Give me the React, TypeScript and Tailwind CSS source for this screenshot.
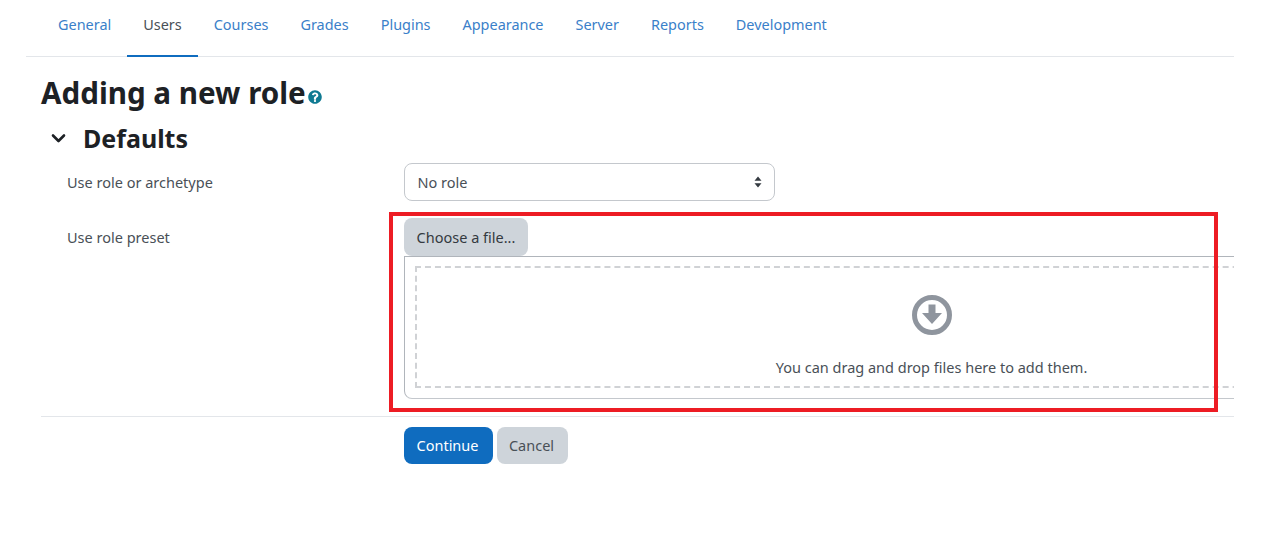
const tabs = ["General", "Users", "Courses", "Grades", "Plugins", "Appearance", "Server", "Reports", "Development"];

export default function App() {
  return (
    <div className="relative h-[537px] w-[1273px] overflow-hidden bg-white text-[14.5px] leading-[22px] text-[#495057]" style={{ fontFamily: '"Noto Sans", "Open Sans", sans-serif' }}>
      <div className="ml-[26px] w-[1208px] overflow-hidden">
        <nav className="flex h-[57px] items-stretch border-b border-[#e3e6ea] pl-[16px] text-[14.44px]">
          {tabs.map((t) => (
            <a key={t} className={t === "Users" ? "flex h-[57px] items-center border-b-2 border-[#0f6cbf] px-[16px] pb-[5px] text-[#495057]" : "flex h-[57px] items-center border-b-2 border-transparent px-[16px] pb-[5px] text-[#3a80c9]"}>{t}</a>
          ))}
        </nav>
        <div className="pl-[15px]">
          <h1 className="mt-[16px] flex items-end text-[29.600px] font-bold leading-[40px] text-[#1d2125]">
            Adding a new role
            <svg className="mb-[9px] ml-[2px] h-[14px] w-[14px]" viewBox="0 0 512 512"><path fill="#0f7a92" d="M504 256c0 137-111 248-248 248S8 393 8 256 119 8 256 8s248 111 248 248zM262.700 90c-54.500 0-89.300 23-116.500 63.800-3.500 5.300-2.400 12.400 2.700 16.300l34.700 26.300c5.200 3.900 12.600 3 16.700-2.100 17.900-22.700 30.100-35.800 57.300-35.800 20.400 0 45.700 13.100 45.700 33 0 15-12.400 22.700-32.600 34-23.600 13.200-54.800 29.700-54.800 70.900V340c0 6.600 5.400 12 12 12h56c6.600 0 12-5.400 12-12v-41.300c0-28.600 83.400-29.700 83.400-107C378 133.400 318 90 262.700 90zM256 368c-20 0-40 16-40 36s20 36 40 36 40-16 40-36-20-36-40-36z" /></svg>
          </h1>
          <div className="mt-[7px] flex items-center text-[25px] font-bold leading-[36px] text-[#1d2125]">
            <svg className="ml-[9px] mr-[16px] h-[16px] w-[17px]" viewBox="0 0 16 16" fill="none" stroke="#1d2125" strokeWidth="2.600" strokeLinecap="round" strokeLinejoin="round"><path d="M2.500 5.500 8 11l5.500-5.500" /></svg>
            Defaults
          </div>
          <div className="mt-[7px] flex">
            <div className="w-[363px] pl-[26px] pt-[8px]">Use role or archetype</div>
            <div className="-ml-[0.5px] flex h-[38px] w-[371px] items-center justify-between rounded-[8px] border border-[#c4c8cd] pl-[13px] pr-[12px]">
              <span>No role</span>
              <svg className="h-[12px] w-[8px]" viewBox="0 0 8 12" fill="#343a40"><path d="M4 0.500 7.500 4.800H0.500zM4 11.500 0.500 7.200h7z" /></svg>
            </div>
          </div>
          <div className="mt-[17px] flex">
            <div className="w-[363px] shrink-0 pl-[26px] pt-[8px]">Use role preset</div>
            <div className="w-[1056px] shrink-0">
              <button className="block h-[38px] w-[124px] rounded-[8px] bg-[#ced4da] text-center text-[#343a40]">Choose a file...</button>
              <div className="h-[143px] rounded-b-[8px] border border-[#b0b5bb] border-b-[#c4c8cd] p-[9px_11px_11px_10px]">
                <div className="flex h-[122px] flex-col items-center border-2 border-dashed border-[#d0d2d5] pt-[27px]">
                  <svg className="h-[40px] w-[40px]" viewBox="0 0 40 40"><circle cx="20" cy="20" r="17.500" fill="none" stroke="#8f959e" strokeWidth="5" /><path fill="#8f959e" d="M16.500 9.500h7V18H30L20 29 10 18h6.500z" /></svg>
                  <div className="mt-[21px] text-[#495057]">You can drag and drop files here to add them.</div>
                </div>
              </div>
            </div>
          </div>
          <div className="mt-[17px] flex border-t border-[#e3e6ea] pl-[363px] pt-[10px]">
            <button className="h-[37px] w-[89px] rounded-[8px] bg-[#0f6cbf] pb-[2px] pr-[2px] text-center text-white">Continue</button>
            <button className="ml-[4px] h-[37px] w-[71px] rounded-[8px] bg-[#ced4da] pb-[2px] pr-[2px] text-center text-[#495057]">Cancel</button>
          </div>
        </div>
      </div>
      <div className="absolute left-[389px] top-[212px] h-[200px] w-[829px] border-4 border-[#ed1c24]" />
    </div>
  );
}
